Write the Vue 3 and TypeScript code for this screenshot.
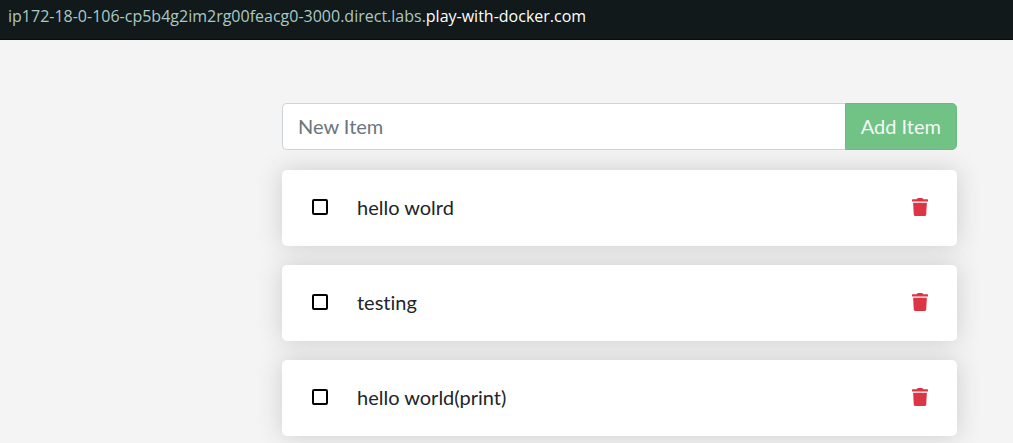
<script setup lang="ts">
import { ref } from 'vue'

interface TodoItem {
  id: number
  name: string
  completed: boolean
}

const newItem = ref('')
const items = ref<TodoItem[]>([
  { id: 1, name: 'hello wolrd', completed: false },
  { id: 2, name: 'testing', completed: false },
  { id: 3, name: 'hello world(print)', completed: false },
])

let nextId = 4

function addItem() {
  const name = newItem.value.trim()
  if (!name) return
  items.value.push({ id: nextId++, name, completed: false })
  newItem.value = ''
}

function removeItem(id: number) {
  items.value = items.value.filter((item) => item.id !== id)
}
</script>

<template>
  <div class="page">
    <header class="address">
      <span class="subdomain">ip172-18-0-106-cp5b4g2im2rg00feacg0-3000.direct.labs.</span><span class="domain">play-with-docker.com</span>
    </header>
    <main class="content">
      <form class="new-item" @submit.prevent="addItem">
        <input v-model="newItem" class="new-item-input" type="text" placeholder="New Item" aria-label="New Item" />
        <button class="new-item-button" type="submit">Add Item</button>
      </form>
      <ul class="items">
        <li v-for="item in items" :key="item.id" class="item">
          <input :id="`item-${item.id}`" v-model="item.completed" class="check" type="checkbox" />
          <label class="name" :for="`item-${item.id}`">{{ item.name }}</label>
          <button class="remove" type="button" :aria-label="`Remove ${item.name}`" @click="removeItem(item.id)">
            <svg viewBox="0 0 16 18" width="16" height="18" aria-hidden="true">
              <path d="M0.6 1.2H4.6L5.2 0.4Q5.5 0 6 0H10Q10.5 0 10.8 0.4L11.4 1.2H15.4Q16 1.2 16 1.8V3Q16 3.5 15.4 3.5H0.6Q0 3.5 0 3V1.8Q0 1.2 0.6 1.2Z" />
              <path d="M1.1 4.8H14.9L14.2 16.5Q14.1 18 12.6 18H3.4Q1.9 18 1.8 16.5Z" />
            </svg>
          </button>
        </li>
      </ul>
    </main>
  </div>
</template>

<style>
body {
  margin: 0;
  background: #f4f4f4;
}
</style>

<style scoped>
.page {
  color: #212529;
  font-family: Lato, "Liberation Sans", sans-serif;
  font-size: 20px;
  font-variant-ligatures: none;
  line-height: 30px;
}

.address {
  box-sizing: border-box;
  height: 40px;
  padding: 4px 8px;
  overflow: hidden;
  background: #11191a;
  border-bottom: 1px solid #080c0d;
  font-family: "Open Sans", "Noto Sans", sans-serif;
  font-size: 16px;
  line-height: 24px;
  white-space: nowrap;
}

.subdomain {
  color: #a9c9c5;
}

.domain {
  color: #fff;
}

.content {
  padding: 63px 56px 8px 282px;
}

.new-item {
  display: flex;
  margin-bottom: 20px;
}

.new-item-input {
  box-sizing: border-box;
  flex: 1;
  min-width: 0;
  height: 47px;
  padding: 0 15px 2px;
  border: 1px solid #ced4da;
  border-right: 0;
  border-radius: 5px 0 0 5px;
  background: #fff;
  color: #495057;
  font: inherit;
  outline: none;
}

.new-item-input::placeholder {
  color: #6c757d;
  opacity: 1;
}

.new-item-button {
  height: 47px;
  padding: 0 15px 2px;
  border: 1px solid #6abb7d;
  border-radius: 0 5px 5px 0;
  background: #71c285;
  color: #f4f8f5;
  font: inherit;
  cursor: pointer;
}

.items {
  display: flex;
  flex-direction: column;
  gap: 19px;
  margin: 0;
  padding: 0;
  list-style: none;
}

.item {
  display: flex;
  align-items: center;
  box-sizing: border-box;
  min-height: 76px;
  padding: 18px 29px 20px;
  border-radius: 5px;
  background: #fff;
  box-shadow: 0 0 25px #ccc;
}

.check {
  box-sizing: border-box;
  appearance: none;
  width: 16px;
  height: 16px;
  margin: 0 29px 0 1px;
  border: 2px solid #000;
  border-radius: 2px;
  background: #fff;
}

.check:checked {
  background: #000;
}

.name {
  flex: 1;
}

.remove {
  display: flex;
  padding: 0;
  border: 0;
  background: none;
  cursor: pointer;
}

.remove svg {
  fill: #dc3545;
}
</style>
